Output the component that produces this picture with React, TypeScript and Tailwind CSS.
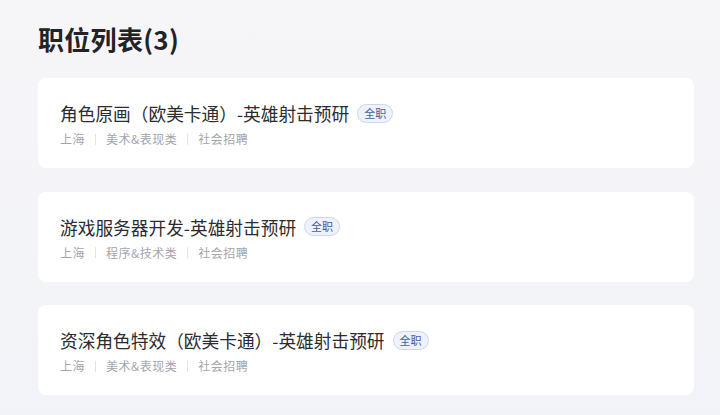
import React from 'react';

const jobs = [
  { title: '角色原画（欧美卡通）-英雄射击预研', type: '全职', city: '上海', category: '美术&表现类', channel: '社会招聘' },
  { title: '游戏服务器开发-英雄射击预研', type: '全职', city: '上海', category: '程序&技术类', channel: '社会招聘' },
  { title: '资深角色特效（欧美卡通）-英雄射击预研', type: '全职', city: '上海', category: '美术&表现类', channel: '社会招聘' },
];

function Sep() {
  return <span className="mx-[10px] inline-block h-[11px] w-px bg-[#e2e3e8]" />;
}

export default function App() {
  return (
    <div
      className="min-h-[415px] w-[720px] bg-gradient-to-b from-[#f6f6f9] to-[#f2f3f8] pl-[38px] pr-[26px] pt-[24px]"
      style={{ fontFamily: '"Noto Sans CJK SC", "Noto Sans", sans-serif' }}
    >
      <h1 className="text-[26px] font-bold leading-[30px] tracking-[0.3px] text-[#222326]">职位列表(3)</h1>
      <div className="mt-[24px] flex flex-col gap-[23.5px]">
        {jobs.map((job) => (
          <div key={job.title} className="rounded-[8px] bg-white px-[22px] pb-[21px] pt-[23px]">
            <div className="flex items-center">
              <span className="text-[17.7px] leading-[24px] text-[#2b2c30]">{job.title}</span>
              <span className="ml-[8px] rounded-full border border-[#cdd6ee] bg-[#eef2fb] px-[6px] text-[11px] leading-[17px] text-[#4b5c9c]">
                {job.type}
              </span>
            </div>
            <div className="mt-[6px] flex items-center text-[12px] leading-[16px] tracking-[0.5px] text-[#a3a5ab]">
              <span>{job.city}</span>
              <Sep />
              <span>{job.category}</span>
              <Sep />
              <span>{job.channel}</span>
            </div>
          </div>
        ))}
      </div>
    </div>
  );
}
